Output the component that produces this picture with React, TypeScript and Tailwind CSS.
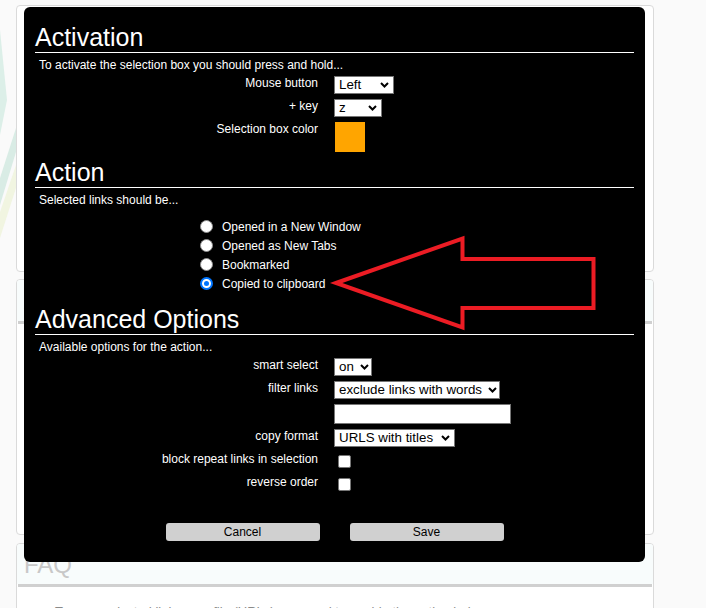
import React from "react";

// ── Small form pieces (drawn, so the look doesn't depend on native widgets) ──

function Chevron() {
  return (
    <svg width="9" height="6" viewBox="0 0 9 6" className="shrink-0">
      <polyline points="1,1 4.5,4.5 8,1" fill="none" stroke="#000" strokeWidth="2" />
    </svg>
  );
}

function FakeSelect({ value, width }: { value: string; width: string }) {
  return (
    <div
      className={`${width} h-[18px] bg-white border border-[#767676] flex items-center justify-between gap-[6px] pl-[4px] pr-[4px] text-[13.33px] leading-none text-black whitespace-nowrap`}
    >
      <span>{value}</span>
      <Chevron />
    </div>
  );
}

function Checkbox() {
  return (
    <div className="h-[18px]">
      <div className="mt-[3px] ml-[4px] w-[13px] h-[13px] bg-white border border-[#767676] rounded-[2px]" />
    </div>
  );
}

function Radio({ checked, label }: { checked?: boolean; label: string }) {
  return (
    <div className="h-[19px] flex items-center">
      {checked ? (
        <span className="w-[13px] h-[13px] rounded-full bg-white border-[2px] border-[#0075ff] flex items-center justify-center">
          <span className="w-[5px] h-[5px] rounded-full bg-[#0075ff]" />
        </span>
      ) : (
        <span className="w-[13px] h-[13px] rounded-full bg-white border border-[#8f8f8f]" />
      )}
      <span className="ml-[9px]">{label}</span>
    </div>
  );
}

function Label({ children }: { children: React.ReactNode }) {
  return <div className="text-right text-[12px] leading-[14px]">{children}</div>;
}

function Heading({ children, className = "" }: { children: React.ReactNode; className?: string }) {
  return (
    <h1 className={`text-[25px] leading-[29px] font-normal border-b border-white ${className}`}>
      {children}
    </h1>
  );
}

// ── Page ──────────────────────────────────────────────────────────────────────

export default function App() {
  return (
    <div className="relative w-[706px] h-[608px] overflow-hidden bg-[#fafafa] font-['Liberation_Sans',Arial,sans-serif]">
      {/* faint logo shapes left of the first card */}
      <svg className="absolute left-0 top-0" width="16" height="280" viewBox="0 0 16 280">
        <polygon points="0,30 7,100 0,135" fill="#dcefe8" />
        <polygon points="0,178 16,128 16,152 0,205" fill="#d9ece5" />
        <polygon points="0,212 16,165 16,188 0,238" fill="#f1f5e1" />
      </svg>

      {/* options page behind the dialog */}
      <div className="flex flex-col pl-[16px] pt-[5px] w-[654px]">
        <div className="h-[267px] bg-white border border-[#dadada] rounded-[4px]" />

        <div className="mt-[7px] h-[256px] bg-white border border-[#dadada] rounded-[4px] overflow-hidden">
          <div className="h-[41px] bg-[#f8fcfc] pl-[7px] pt-[7px] text-[24px] leading-[28px] text-[#c8c8c8]">
            A
          </div>
          <div className="mx-[1px] h-[3px] bg-[#d0d0d0]" />
        </div>

        <div className="mt-[8px] h-[100px] bg-white border border-[#dadada] rounded-[4px] overflow-hidden">
          <div className="h-[40px] bg-[#f8fcfc] pl-[7px] pt-[7px] text-[24px] leading-[28px] text-[#c8c8c8]">
            FAQ
          </div>
          <div className="mx-[1px] h-[3px] bg-[#d0d0d0]" />
          <p className="mt-[17px] pl-[38px] text-[13px] leading-[15px] text-[#8a8a8a]">
            To save selected links as a file (URLs) you need to enable the option below
          </p>
        </div>
      </div>

      {/* settings dialog */}
      <div className="absolute left-[24px] top-[7px] w-[621px] h-[555px] bg-black rounded-[6px] text-white px-[11px] pt-[16px]">
        <Heading>Activation</Heading>
        <p className="mt-[5px] pl-[4px] text-[12px] leading-[14px]">
          To activate the selection box you should press and hold...
        </p>
        <div className="mt-[4px] grid grid-cols-[283px_1fr] gap-x-[16px] gap-y-[5px] items-start">
          <Label>Mouse button</Label>
          <FakeSelect value="Left" width="w-[60px]" />
          <Label>+ key</Label>
          <FakeSelect value="z" width="w-[48px]" />
          <Label>Selection box color</Label>
          <div className="ml-[1px] w-[30px] h-[30px] bg-[#ffa500]" />
        </div>

        <Heading className="mt-[6px]">Action</Heading>
        <p className="mt-[5px] pl-[4px] text-[12px] leading-[14px]">Selected links should be...</p>
        <div className="mt-[10px] pl-[165px] text-[12px] leading-[14px]">
          <Radio label="Opened in a New Window" />
          <Radio label="Opened as New Tabs" />
          <Radio label="Bookmarked" />
          <Radio checked label="Copied to clipboard" />
        </div>

        <Heading className="mt-[12px]">Advanced Options</Heading>
        <p className="mt-[5px] pl-[4px] text-[12px] leading-[14px]">Available options for the action...</p>
        <div className="mt-[4px] grid grid-cols-[283px_1fr] gap-x-[16px] gap-y-[5px] items-start">
          <Label>smart select</Label>
          <FakeSelect value="on" width="w-[38px]" />
          <Label>filter links</Label>
          <FakeSelect value="exclude links with words" width="w-[166px]" />
          <div />
          <div className="w-[177px] h-[20px] bg-white border border-[#767676]" />
          <Label>copy format</Label>
          <FakeSelect value="URLS with titles" width="w-[121px]" />
          <Label>block repeat links in selection</Label>
          <Checkbox />
          <Label>reverse order</Label>
          <Checkbox />
        </div>

        <div className="mt-[30px] flex justify-center gap-[30px]">
          <button className="w-[154px] h-[18px] bg-[#d0d0d0] rounded-[3px] text-[12px] leading-[18px] text-black">
            Cancel
          </button>
          <button className="w-[154px] h-[18px] bg-[#d0d0d0] rounded-[3px] text-[12px] leading-[18px] text-black">
            Save
          </button>
        </div>
      </div>

      {/* red annotation arrow */}
      <svg className="absolute left-0 top-0 pointer-events-none" width="706" height="608" viewBox="0 0 706 608">
        <polygon
          points="336,283 462.5,238.5 462.5,259 593.5,259 593.5,308 462.5,308 462.5,327.5"
          fill="none"
          stroke="#ec1c24"
          strokeWidth="4"
          strokeLinejoin="miter"
        />
      </svg>
    </div>
  );
}
